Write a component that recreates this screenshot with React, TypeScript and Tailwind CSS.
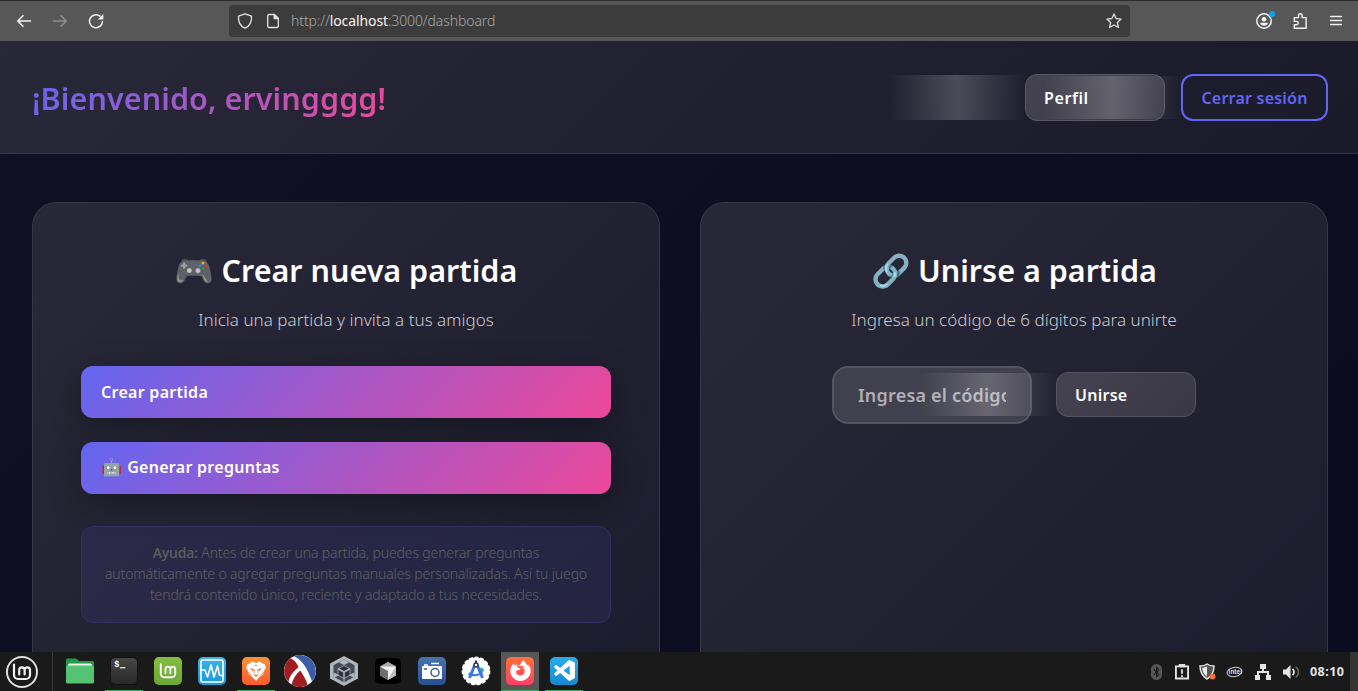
import React from "react";
import { SiFirefoxbrowser } from "react-icons/si";
import { BiLogoVisualStudio } from "react-icons/bi";
import { FaBluetoothB } from "react-icons/fa";

const stroke = { fill: "none", stroke: "currentColor", strokeWidth: 1.3, strokeLinecap: "round" as const, strokeLinejoin: "round" as const };

function Toolbar() {
  return (
    <div className="flex h-[41px] shrink-0 items-center border-t border-[#2b2b2b] bg-[#575757] text-[#f4f4f4]">
      <div className="flex w-[229px] items-center gap-5 pl-4">
        <svg width="16" height="16" viewBox="0 0 16 16" {...stroke} strokeWidth={1.6}><path d="M14.5 8H1.8M7 2.7 1.7 8 7 13.3" /></svg>
        <svg className="text-[#8e8e8e]" width="16" height="16" viewBox="0 0 16 16" {...stroke} strokeWidth={1.6}><path d="M1.5 8h12.7M9 2.7 14.3 8 9 13.3" /></svg>
        <svg width="16" height="16" viewBox="0 0 16 16" {...stroke} strokeWidth={1.5}><path d="M14.5 8.500A6.500 6.500 0 1 1 12 3.100" /><path d="M15.300 1v5.500H9.800z" fill="currentColor" strokeWidth="0" /></svg>
      </div>
      <div className="flex h-8 w-[901px] items-center rounded bg-[#3c3c3c] px-2">
        <svg className="text-[#e4e4e4]" width="16" height="16" viewBox="0 0 16 16" {...stroke}><path d="M8 .9 14.500 3.200c.4 5-1.500 9.700-6.500 12C3 12.900 1.100 8.200 1.500 3.200z" /></svg>
        <svg className="ml-3 text-[#e4e4e4]" width="16" height="16" viewBox="0 0 16 16" {...stroke}><path d="M9.300 1.500H4A1.300 1.300 0 0 0 2.700 2.800v10.400A1.300 1.300 0 0 0 4 14.500h8a1.300 1.300 0 0 0 1.300-1.300V5.500z" /><path d="M9.200 1.500v4h4.100z" fill="currentColor" /></svg>
        <span className="ml-[10px] -mt-px whitespace-nowrap text-[14px] font-light tracking-[-0.1px] text-[#a8a8a8]">http://<span className="font-normal text-[#f4f4f4]">localhost</span>:3000/dashboard</span>
        <svg className="ml-auto text-[#dddddd]" width="16" height="16" viewBox="0 0 16 16" {...stroke}><path d="m8 .9 2.1 4.600 5 .600-3.700 3.400 1 5L8 12l-4.400 2.500 1-5L.900 6.100l5-.600z" /></svg>
      </div>
      <div className="ml-auto flex items-center gap-5 pr-[14px]">
        <span className="relative h-4 w-4">
          <svg width="16" height="16" viewBox="0 0 16 16" {...stroke} strokeWidth={1.5}><circle cx="8" cy="8" r="7.200" /><circle cx="8" cy="6.200" r="2.300" fill="currentColor" strokeWidth="0" /><path d="M4.200 9.800h7.600c0 4-7.600 4-7.600 0z" fill="currentColor" strokeWidth="0" /></svg>
          <i className="absolute -right-[3px] -top-[2px] h-[6px] w-[6px] rounded-full bg-[#00a7f5]" />
        </span>
        <svg width="16" height="16" viewBox="0 0 16 16" {...stroke} strokeWidth={1.4}><path d="M6.500 4.600V2.600a1.800 1.800 0 0 1 3.600 0v2h4V15.200H2.300v-3.400h2.200a1.700 1.700 0 0 0 0-3.400H2.300V4.600z" /></svg>
        <svg width="16" height="16" viewBox="0 0 16 16" {...stroke} strokeWidth={1.3}><path d="M2.500 3.500h11M2.500 7.500h11M2.500 11.500h11" /></svg>
      </div>
    </div>
  );
}

function Header() {
  return (
    <header className="flex h-[113px] shrink-0 items-center justify-between border-b border-[#383744] bg-linear-[135deg,#292839,#1a1a2b] pl-8 pr-[30px]">
      <h1 className="mt-[2px] whitespace-nowrap bg-linear-[135deg,#6366f1,#ec4899] bg-clip-text text-[30.500px] font-semibold leading-[45px] tracking-[0.080px] text-transparent">¡Bienvenido, ervingggg!</h1>
      <div className="flex items-center gap-4">
        <div className="relative flex h-[47px] w-[140px] items-center rounded-xl border border-[#5a5964] bg-linear-[135deg,#454350,#393745] pl-[18px]">
          <i className="absolute -left-[138px] top-0 h-[45px] w-[138px] bg-linear-[90deg,transparent,#ffffff33,transparent]" />
          <i className="absolute left-[18px] top-px h-[43px] w-[138px] bg-linear-[90deg,transparent,#ffffff33,transparent]" />
          <span className="relative pt-[2px] text-[16px] font-semibold tracking-[0.6px] text-white">Perfil</span>
        </div>
        <div className="flex h-[47px] w-[147px] items-center justify-center rounded-xl border-2 border-[#6366f1] text-[16px] font-semibold tracking-[0.220px] text-[#6366f1]"><span className="whitespace-nowrap pt-[2px]">Cerrar sesión</span></div>
      </div>
    </header>
  );
}

const card = "flex h-[600px] w-[628px] shrink-0 flex-col rounded-3xl border border-[#383744] bg-linear-[135deg,#292838,#1a1b2c] px-12 pt-[44px]";
const heading = "flex h-12 items-center justify-center gap-[7px] whitespace-nowrap text-[30.500px] font-semibold text-white";
const subtitle = "mt-[11px] whitespace-nowrap text-center text-[17px] font-light leading-[27px] tracking-[0.03px] text-[#cbcad1]";
const gradientButton = "flex h-[52px] shrink-0 items-center rounded-xl bg-linear-[135deg,#6366f1,#ec4899] pl-5 text-[16px] font-semibold tracking-[0.280px] text-white shadow-[0_8px_32px_rgba(0,0,0,0.3)]";

function Cards() {
  return (
    <main className="flex h-[498px] gap-10 overflow-hidden bg-linear-[135deg,#0f1024,#0c0c20] px-8 pt-12">
      <section className={card}>
        <h2 className={heading}><span className="-mt-px font-['Noto_Color_Emoji'] text-[32px]">🎮</span><span>Crear nueva partida</span></h2>
        <p className={subtitle}>Inicia una partida y invita a tus amigos</p>
        <div className="mt-[33px] flex flex-col gap-6">
          <div className={gradientButton}><span>Crear partida</span></div>
          <div className={gradientButton}><div className="flex items-center gap-[5px] pb-[2px]"><span className="font-['Noto_Color_Emoji'] text-[17px] leading-6 tracking-normal">🤖</span><span className="leading-6">Generar preguntas</span></div></div>
        </div>
        <div className="mt-8 flex h-[97px] shrink-0 flex-col justify-center rounded-xl border border-[#323064] bg-[#6366f11a] pb-[2px] text-center text-[14px] font-light leading-[21px] tracking-[-0.150px] text-[#606062]">
          <span className="whitespace-nowrap"><b className="font-medium">Ayuda:</b> Antes de crear una partida, puedes generar preguntas</span>
          <span className="whitespace-nowrap">automáticamente o agregar preguntas manuales personalizadas. Así tu juego</span>
          <span className="whitespace-nowrap">tendrá contenido único, reciente y adaptado a tus necesidades.</span>
        </div>
      </section>
      <section className={card}>
        <h2 className={heading}><span className="-mt-px font-['Noto_Color_Emoji'] text-[32px]">🔗</span><span>Unirse a partida</span></h2>
        <p className={subtitle}>Ingresa un código de 6 dígitos para unirte</p>
        <div className="mt-[33px] flex items-center justify-center gap-6">
          <div className="flex h-[58px] w-[200px] items-center rounded-2xl border-2 border-[#55535f] bg-[#41404e] px-6"><div className="w-[148px] overflow-hidden whitespace-nowrap text-[18px] font-semibold tracking-[0.200px] text-[#b0afb6]">Ingresa el código</div></div>
          <div className="relative mb-px flex h-[45px] w-[140px] items-center rounded-xl border border-[#555460] bg-linear-[135deg,#454350,#393745] pl-[18px] text-[16px] font-semibold tracking-[0.250px] text-white">
            <i className="absolute -left-[138px] top-0 h-[43px] w-[138px] bg-linear-[90deg,transparent,#ffffff33,transparent]" />
            <span className="pt-px">Unirse</span>
          </div>
        </div>
      </section>
    </main>
  );
}

const tile = "flex h-7 w-7 items-center justify-center rounded-[5px]";

function Slot({ children, state }: { children: React.ReactNode; state?: "open" | "active" }) {
  return (
    <div className={state === "active" ? "flex h-full w-[38px] items-center justify-center border-b border-[#2fae5b] bg-[#575757] pb-px" : state === "open" ? "flex h-full w-[38px] items-center justify-center border-b border-[#2fae5b] pb-px" : "flex h-full w-[38px] items-center justify-center border-b border-transparent pb-px"}>{children}</div>
  );
}

function Mint({ size }: { size: number }) {
  return (
    <svg width={size} height={size} viewBox="0 0 20 20" fill="none" stroke="#f2f2f2" strokeWidth="2.200" strokeLinecap="round" strokeLinejoin="round"><path d="M2 2.500v10.500a4 4 0 0 0 4 4h8a4 4 0 0 0 4-4V8a2.700 2.700 0 0 0-5.400 0v4.500M12.600 12.500V8a2.700 2.700 0 0 0-5.400 0v4.500" /></svg>
  );
}

function Lion() {
  return (
    <svg width="20" height="22" viewBox="0 0 20 22">
      <path d="M6 1.500 10 3l4-1.500 2 2 2.500.5L20 8l-1.500 1.500L17.500 14l-4 3L10 21l-3.500-4-4-3-1-4.500L0 8l1.500-4L4 3.500z" fill="#fff" />
      <path d="m4 8 4 1.200-1 2.300zM16 8l-4 1.200 1 2.300zM7 14l3 1 3-1-3 3zM8.500 5h3L10 6z" fill="#f8692f" />
      <path d="m8.700 9.500-.7 3.500M11.300 9.500l.7 3.500" stroke="#f8813b" strokeWidth=".8" />
      <path d="m2 12 3.500 3M18 12l-3.500 3" stroke="#f8692f" strokeWidth=".8" />
    </svg>
  );
}

function Taskbar() {
  return (
    <footer className="flex h-[39px] shrink-0 items-center bg-[#1a1a1a]">
      <div className="flex w-[52px] items-center pl-[6px]"><span className="flex h-8 w-8 items-center justify-center rounded-full border-[2.500px] border-[#dedede]"><Mint size={20} /></span></div>
      <div className="mr-2 h-full w-px bg-[#373737]" />
      <div className="flex h-full items-center gap-[6px]">
        <Slot><svg width="28" height="26" viewBox="0 0 28 26"><path d="M0 2a1.500 1.500 0 0 1 1.500-1.500h8.500L13 3h13.500A1.500 1.500 0 0 1 28 4.500V10H0z" fill="#219b45" /><path d="M2 7a1.500 1.500 0 0 1 1.500-1.500h21A1.500 1.500 0 0 1 26 7v4H2z" fill="#eee" /><rect y="7.500" width="28" height="18" rx="1.500" fill="#54c374" /></svg></Slot>
        <Slot state="open"><div className={`${tile} border border-[#111] bg-linear-[180deg,#464646,#292929]`}><svg width="28" height="28" viewBox="0 0 28 28"><text x="3.500" y="9.800" fontFamily="Liberation Mono" fontSize="9" fontWeight="bold" fill="#fff">$</text><path d="M9.500 10.500h6" stroke="#fff" strokeWidth="1.200" /></svg></div></Slot>
        <Slot><div className={`${tile} bg-linear-[180deg,#83bd42,#6aa634]`}><Mint size={18} /></div></Slot>
        <Slot><div className={`${tile} bg-linear-[180deg,#3cb4ea,#1d98d6]`}><svg width="24" height="24" viewBox="0 0 24 24" {...stroke} stroke="#fff" strokeWidth={1.6}><rect x="1" y="1" width="22" height="22" rx="2" /><path d="M1 11h4l2.500 7L11 6l3 12 3.500-11 2 9 3.500 1" /></svg></div></Slot>
        <Slot state="open"><div className={`${tile} bg-linear-[180deg,#f79334,#fa5b2d]`}><Lion /></div></Slot>
        <Slot><svg width="32" height="32" viewBox="0 0 32 32"><circle cx="16" cy="16" r="16" fill="#fff" /><path d="M10 1.200A16 16 0 0 1 28 26.500C24 15 19 5 10 1.200z" fill="#3d5ca8" /><path d="M6.500 3.200c4.500 2 6.500 5 8 9C8.500 17 5.500 21 4.500 27A16 16 0 0 1 6.500 3.200z" fill="#a11d22" /><path d="M16.200 15.500C20 21 22.500 25.500 23.500 30A16 16 0 0 1 7.500 29.500C9 24 12 19 16.200 15.500z" fill="#a11d22" /></svg></Slot>
        <Slot><svg width="28" height="30" viewBox="0 0 28 30"><path d="M14 0 28 7.500v15L14 30 0 22.500v-15z" fill="#b1b5bd" /><path d="M14 3.500 24.500 9.200v11.600L14 26.500 3.500 20.800V9.200z" fill="#434b57" /><path d="m14 3.500-5 3L14 9l5-2.500z" fill="#b1b5bd" /><path d="m14 9.500 6 3.300v6.400l-6 3.300-6-3.300v-6.400z" fill="#2c323c" stroke="#8e949e" /><path d="m8 12.800 6 3.200 6-3.200M14 16v6.500" fill="none" stroke="#b1b5bd" strokeWidth="1.600" /><path d="m4 17 4 2.200-4 2zM24 17l-4 2.200 4 2zM14 22v4" fill="#b1b5bd" stroke="#b1b5bd" /></svg></Slot>
        <Slot><div className="flex h-[26px] w-[26px] items-center justify-center rounded-[5px] bg-black"><svg width="16" height="18" viewBox="0 0 16 18"><path d="M8 0 16 4.500v9L8 18 0 13.500v-9z" fill="#999" /><path d="M0 4.500 8 9v9l-8-4.500z" fill="#6f6f6f" /><path d="M0 4.500 8 0l8 4.500z" fill="#aaa" /><path d="M0 4.500h16L8 18V9z" fill="#f2f2f2" /><path d="M16 4.500 8 18l8-4.500z" fill="#bbb" /></svg></div></Slot>
        <Slot><div className={`${tile} bg-linear-[180deg,#4873b3,#274f8e]`}><svg width="22" height="20" viewBox="0 0 22 20"><rect x="1" y="5" width="20" height="13" rx="1" fill="#fff" /><path d="M3 4h4M10 2.500h8" stroke="#fff" strokeWidth="1.500" /><circle cx="14" cy="11.500" r="4" fill="#fff" stroke="#375d96" strokeWidth="1.500" /><path d="M3 8h3" stroke="#375d96" strokeWidth="1.500" /></svg></div></Slot>
        <Slot><svg width="30" height="30" viewBox="0 0 30 30"><circle cx="15" cy="15" r="13.500" fill="#fff" /><circle cx="15" cy="15" r="13.600" fill="none" stroke="#fff" strokeWidth="1.600" strokeDasharray="2.850 2.850" strokeLinecap="round" /><path d="M19 11.500c3 0 4 1.500 4 3.500l-3 2z" fill="#3eb55d" /><path d="M13.800 9 8.500 22M16.200 9l5.300 13" stroke="#3978e6" strokeWidth="3" /><path d="M7.500 17.500c4 2.500 10 2.500 14-1" fill="none" stroke="#3978e6" strokeWidth="2.200" /><circle cx="15" cy="9" r="2" fill="#fff" stroke="#2d3b50" strokeWidth="1.500" /><path d="M15 4.500v3" stroke="#2d3b50" strokeWidth="2" /></svg></Slot>
        <Slot state="active"><div className={`${tile} bg-linear-[180deg,#ff7139,#ff3f65]`}><SiFirefoxbrowser size={21} color="#fff" /></div></Slot>
        <Slot state="open"><div className={`${tile} bg-linear-[180deg,#27aeea,#1688d0]`}><BiLogoVisualStudio size={25} color="#fff" /></div></Slot>
      </div>
      <div className="ml-auto flex h-full items-center text-[#e4e4e4]">
        <span className="mr-[13px] flex h-4 w-[11px] items-center justify-center rounded-full bg-[#555] text-[#191919]"><FaBluetoothB size={12} /></span>
        <svg className="mr-[10px]" width="14" height="17" viewBox="0 0 15 17"><path d="M1 3h13v13H1z" fill="none" stroke="currentColor" strokeWidth="2" /><path d="M4 .5h7V4H4z" fill="currentColor" /><path d="M7.500 6v5M7.500 12.500v2" stroke="currentColor" strokeWidth="2" /></svg>
        <svg className="mr-[10px]" width="17" height="17" viewBox="0 0 17 17"><path d="M8 1c2 1.500 4 2 7 2 0 6-2 10-7 13C3 13 1 9 1 3c3 0 5-.500 7-2z" fill="#555" stroke="#e4e4e4" strokeWidth="1.500" /><path d="M8 3.500v10C5 11.500 3.500 9 3.200 5z" fill="#eee" /><circle cx="13.500" cy="13.500" r="3" fill="#ef7338" /></svg>
        <svg className="mr-[12px]" width="17" height="12" viewBox="0 0 17 12"><ellipse cx="8.500" cy="6" rx="7.500" ry="4.600" fill="none" stroke="#c8c8c8" strokeWidth="1" transform="rotate(-8 8.500 6)" /><text x="2.600" y="8.200" fontFamily="Liberation Sans" fontSize="6.500" fontWeight="bold" fill="#ddd">intel</text></svg>
        <svg className="mr-[12px]" width="16" height="16" viewBox="0 0 16 16" fill="currentColor"><path d="M5 0h6v5H9v2h5v4h2v5h-5v-5h1V9H4v2h1v5H0v-5h2V7h5V5H5z" /></svg>
        <svg className="mr-[10px]" width="17" height="14" viewBox="0 0 17 14"><path d="M0 4.500h3L7.500 0v14L3 9.500H0z" fill="currentColor" /><path d="M9.500 4c2 1.500 2 4.500 0 6" fill="none" stroke="currentColor" strokeWidth="1.800" /><path d="M12.500 1.500c4 3 4 8 0 11" fill="none" stroke="#666" strokeWidth="1.500" /></svg>
        <span className="mr-[5px] w-[35px] whitespace-nowrap pt-[2px] text-[12.500px] font-bold tracking-[0.450px]">08:10</span>
        <div className="h-full w-2 bg-[#353535]" />
      </div>
    </footer>
  );
}

export default function App() {
  return (
    <div className="flex h-[691px] w-[1358px] flex-col overflow-hidden bg-[#1a1a1a] font-['Noto_Sans',sans-serif]">
      <Toolbar />
      <Header />
      <Cards />
      <Taskbar />
    </div>
  );
}
